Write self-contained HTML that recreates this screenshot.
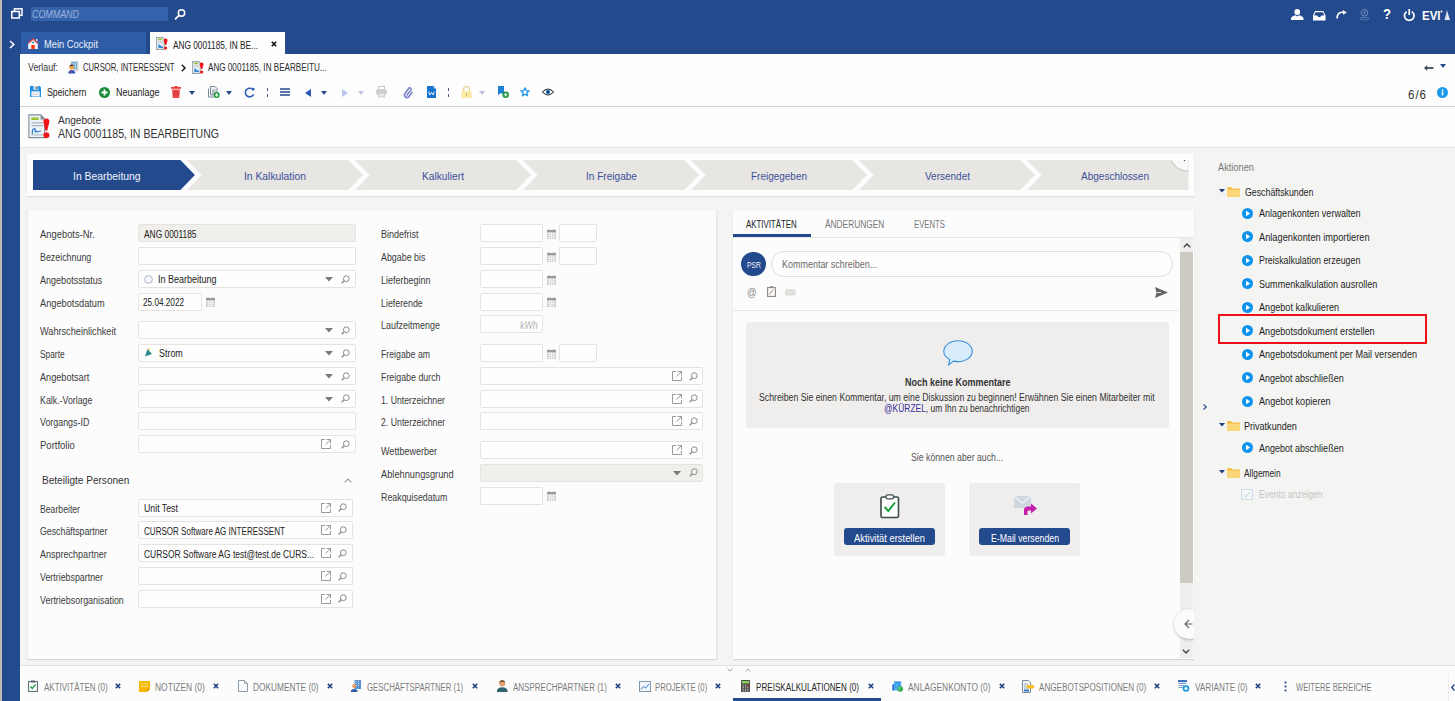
<!DOCTYPE html>
<html><head><meta charset="utf-8">
<style>
*{margin:0;padding:0;box-sizing:border-box}
html,body{width:1455px;height:701px;overflow:hidden}
body{position:relative;background:#f4f4f2;font-family:"Liberation Sans",sans-serif;font-size:10px;color:#333}
.a{position:absolute}
.t{position:absolute;white-space:nowrap;line-height:14px;height:14px;transform-origin:0 50%}
svg{position:absolute;overflow:visible}
.lb{color:#3b3b3b}
.fd{position:absolute;background:#fefefe;border:1px solid #e5e3df;border-radius:1.5px}
.dis{background:#f0efec}
.st{color:#3a4f9a;font-size:11px}
.act{color:#262626}
.bt{color:#6b6b6b;font-size:10px}
.bx{color:#2b4a8a;font-size:11px;font-weight:bold}
</style></head><body>
<!-- left strip & sidebar -->
<div class="a" style="left:0;top:0;width:2px;height:701px;background:#bdbcb2"></div>
<div class="a" style="left:2px;top:0;width:18px;height:701px;background:#244a8e"></div>
<!-- top bar -->
<div class="a" style="left:2px;top:0;width:1453px;height:54px;background:#244a8e"></div>
<div class="a" style="left:31px;top:7px;width:137px;height:14px;background:#3563ab"></div>
<span class="t" style="font-style: italic; color: rgb(157, 179, 220); font-size: 10px; left: 32px; top: 8px; transform: scaleX(0.89);">COMMAND</span>
<!-- window icon -->
<svg style="left:11px;top:8px" width="12" height="11" viewBox="0 0 12 11"><rect x="3.5" y="0.8" width="7.5" height="6.5" fill="none" stroke="#fff" stroke-width="1.5"></rect><rect x="0.8" y="3.5" width="7.5" height="6.5" fill="#244a8e" stroke="#fff" stroke-width="1.5"></rect></svg>
<!-- search icon -->
<svg style="left:174px;top:9px" width="12" height="11" viewBox="0 0 12 11"><circle cx="7.5" cy="4" r="3.2" fill="none" stroke="#fff" stroke-width="1.5"></circle><path d="M5.3 6.2 L1 10.3" stroke="#fff" stroke-width="1.8"></path></svg>
<!-- sidebar chevron -->
<svg style="left:9px;top:40px" width="6" height="9" viewBox="0 0 6 9"><path d="M1 1 L4.8 4.5 L1 8" fill="none" stroke="#fff" stroke-width="1.6"></path></svg>
<!-- tabs -->
<div class="a" style="left:21px;top:32px;width:125px;height:22px;background:#2e5ca6"></div>
<svg style="left:28px;top:38px" width="10" height="11" viewBox="0 0 10 11"><rect x="8" y="1" width="1.3" height="2.5" fill="#e8eef6"></rect><path d="M0.2 5.2 L5.1 0.8 L9.8 5.2 V10.9 H0.2 Z" fill="#f4f6fa"></path><path d="M0.4 5.3 L5.1 1 L9.6 5.3" fill="none" stroke="#d8464a" stroke-width="1.5"></path><rect x="3.3" y="7" width="3.4" height="3.9" fill="#ff3000"></rect><ellipse cx="5.1" cy="4.5" rx="1.2" ry="0.8" fill="#1878a8"></ellipse></svg>
<span class="t" style="color: rgb(232, 238, 248); left: 44px; top: 38px; transform: scaleX(0.934);">Mein Cockpit</span>
<div class="a" style="left:150px;top:32px;width:135px;height:22px;background:#fdfdfd"></div>
<svg style="left:156px;top:37px" width="12" height="13" viewBox="0 0 12 13"><path d="M0.6 0.6 H6.8 L8.2 2 V12.4 H0.6 Z" fill="#eef3f8" stroke="#9aa8ae" stroke-width="1.1"></path><rect x="2" y="1.8" width="4.2" height="1.4" fill="#9cc12e"></rect><path d="M2 4.5H7M2 5.9H7" stroke="#b0bec4" stroke-width="0.6"></path><path d="M2.3 11 V7 L7 10 V11 Z" fill="#3a8ad8"></path><path d="M9.6 1.4 C10.9 1.4 11.6 2.1 11.5 3.4 L10.3 8 H9 L7.8 3.4 C7.7 2.1 8.4 1.4 9.6 1.4 Z" fill="#f2141a"></path><circle cx="9.6" cy="11" r="1.6" fill="#f2141a"></circle></svg>
<span class="t" style="color: rgb(34, 34, 34); left: 172.5px; top: 38.5px; transform: scaleX(0.828);">ANG 0001185, IN BE...</span>
<svg style="left:271px;top:41px" width="6" height="6" viewBox="0 0 6 6"><path d="M0.8 0.8 L5.2 5.2 M5.2 0.8 L0.8 5.2" stroke="#111" stroke-width="1.6"></path></svg>

<!-- white header area -->
<div class="a" style="left:20px;top:54px;width:1435px;height:94px;background:#fdfdfd"></div>
<div class="a" style="left:20px;top:106px;width:1435px;height:1px;background:#d4d1ca"></div>
<div class="a" style="left:20px;top:147px;width:1435px;height:1px;background:#e6e4df"></div>

<!-- Verlauf row -->
<span class="t" style="color: rgb(51, 51, 51); font-size: 10px; left: 28px; top: 60.8px; transform: scaleX(0.884);">Verlauf:</span>
<svg style="left:67.5px;top:60.5px" width="11" height="13" viewBox="0 0 11 13"><rect x="2.6" y="0.2" width="7.8" height="10" fill="#cfd3d6"></rect><path d="M3.5 1.8H9.5M3.5 4.3H9.5M3.5 6.8H9.5" stroke="#2196e8" stroke-width="1.5" stroke-dasharray="1.2 0.9"></path><circle cx="3.6" cy="6.3" r="2.3" fill="#f9a33a"></circle><path d="M1.3 5.6 Q1.8 3.4 3.8 3.6 Q5.6 3.8 5.8 5.2 Q4 4.4 1.3 5.6Z" fill="#3c3a3a"></path><path d="M0.4 12.4 V11.6 Q0.8 9.3 3.6 9 Q6.6 9.3 7.2 11.6 V12.4 Z" fill="#3050c0"></path><path d="M3.6 9.2 L3.1 11 L3.6 12 L4.1 11 Z" fill="#e03030"></path></svg>
<span class="t" style="color: rgb(42, 42, 42); font-size: 10px; left: 83px; top: 60.8px; transform: scaleX(0.77);">CURSOR, INTERESSENT</span>
<svg style="left:180.5px;top:64px" width="5" height="8" viewBox="0 0 5 8"><path d="M0.8 0.8 L4 4 L0.8 7.2" fill="none" stroke="#222" stroke-width="1.5"></path></svg>
<svg style="left:192px;top:60.5px" width="12" height="13" viewBox="0 0 12 13"><path d="M0.6 0.6 H6.8 L8.2 2 V12.4 H0.6 Z" fill="#eef3f8" stroke="#9aa8ae" stroke-width="1.1"></path><rect x="2" y="1.8" width="4.2" height="1.4" fill="#9cc12e"></rect><path d="M2 4.5H7M2 5.9H7" stroke="#b0bec4" stroke-width="0.6"></path><path d="M2.3 11 V7 L7 10 V11 Z" fill="#3a8ad8"></path><path d="M9.6 1.4 C10.9 1.4 11.6 2.1 11.5 3.4 L10.3 8 H9 L7.8 3.4 C7.7 2.1 8.4 1.4 9.6 1.4 Z" fill="#f2141a"></path><circle cx="9.6" cy="11" r="1.6" fill="#f2141a"></circle></svg>
<span class="t" style="color: rgb(42, 42, 42); font-size: 10px; left: 207.5px; top: 60.8px; transform: scaleX(0.812);">ANG 0001185, IN BEARBEITU...</span>
<svg style="left:1424px;top:64.5px" width="9.5" height="6" viewBox="0 0 9.5 6"><path d="M0 3 L3.2 0 V6 Z" fill="#3a5055"></path><rect x="2.5" y="2.1" width="7" height="1.8" fill="#3a5055"></rect></svg>
<svg style="left:1440px;top:64px" width="6" height="4" viewBox="0 0 6 4"><path d="M0 0 H6 L3 4 Z" fill="#244a8e"></path></svg>

<!-- toolbar -->
<svg style="left:30px;top:86px" width="11" height="11" viewBox="0 0 11 11"><path d="M0 0 H10 L11 1.5 V11 H0 Z" fill="#1e8ee0"></path><rect x="3.4" y="0" width="4.9" height="3.8" fill="#d4d8da"></rect><rect x="6.2" y="0.8" width="1.2" height="2.2" fill="#1a5a8a"></rect><rect x="1.4" y="5.3" width="8.3" height="5.2" fill="#f6f7f8"></rect><path d="M2.2 7H9M2.2 8.8H9" stroke="#c8ccd0" stroke-width="0.7"></path></svg>
<span class="t" style="color: rgb(34, 34, 34); left: 46.5px; top: 86px; transform: scaleX(0.877);">Speichern</span>
<svg style="left:99px;top:86.5px" width="11" height="11" viewBox="0 0 11 11"><circle cx="5.5" cy="5.5" r="5.5" fill="#1b8b3a"></circle><path d="M5.5 2.5 V8.5 M2.5 5.5 H8.5" stroke="#fff" stroke-width="1.8"></path></svg>
<span class="t" style="color: rgb(34, 34, 34); left: 115.5px; top: 86px; transform: scaleX(0.899);">Neuanlage</span>
<svg style="left:171px;top:86px" width="10" height="12" viewBox="0 0 10 12"><rect x="0" y="1" width="10" height="1.8" fill="#e83b3b"></rect><rect x="3.5" y="0" width="3" height="1.2" fill="#e83b3b"></rect><path d="M1 3.5 H9 L8.3 12 H1.7 Z" fill="#f05050"></path><path d="M3.3 5 V10.5 M5 5 V10.5 M6.7 5 V10.5" stroke="#b82020" stroke-width="0.6"></path></svg>
<svg style="left:189px;top:90.5px" width="6" height="4" viewBox="0 0 6 4"><path d="M0 0 H6 L3 4 Z" fill="#244a8e"></path></svg>
<svg style="left:207.5px;top:86px" width="12" height="12" viewBox="0 0 12 12"><path d="M2.5 0.5 H7 L9 2.5 V9 H2.5 Z" fill="#eef1f3" stroke="#6a7a88" stroke-width="0.9"></path><path d="M0.5 2.5 V11 H6" fill="none" stroke="#6a7a88" stroke-width="0.9"></path><path d="M4 4h3.5M4 5.8h3.5M4 7.5h2" stroke="#6a7a88" stroke-width="0.7"></path><circle cx="8.7" cy="9" r="3" fill="#1b9b3a"></circle><path d="M8.7 7.3 V10.7 M7 9 H10.4" stroke="#fff" stroke-width="1.1"></path></svg>
<svg style="left:226px;top:90.5px" width="6" height="4" viewBox="0 0 6 4"><path d="M0 0 H6 L3 4 Z" fill="#244a8e"></path></svg>
<svg style="left:244px;top:86.5px" width="11.5" height="11" viewBox="0 0 12 11"><path d="M9.8 3.2 A4.5 4.5 0 1 0 10 7.5" fill="none" stroke="#2f63b5" stroke-width="1.7"></path><path d="M7.5 0.5 L11 0.8 L10.6 4.3 Z" fill="#2f63b5"></path></svg>
<div class="a" style="left:267px;top:88px;width:1px;height:9px;border-left:1px dashed #557"></div>
<svg style="left:280px;top:88px" width="10" height="8" viewBox="0 0 10 8"><path d="M0 1H10M0 4H10M0 7H10" stroke="#244a8e" stroke-width="1.6"></path></svg>
<svg style="left:304.5px;top:88.5px" width="6" height="8" viewBox="0 0 6 8"><path d="M6 0 V8 L0 4 Z" fill="#2e58b8"></path></svg>
<svg style="left:320.5px;top:90.5px" width="6" height="4" viewBox="0 0 6 4"><path d="M0 0 H6 L3 4 Z" fill="#244a8e"></path></svg>
<svg style="left:341.5px;top:88.5px" width="6" height="8" viewBox="0 0 6 8"><path d="M0 0 V8 L6 4 Z" fill="#b9c4ea"></path></svg>
<svg style="left:357.5px;top:90.5px" width="6" height="4" viewBox="0 0 6 4"><path d="M0 0 H6 L3 4 Z" fill="#c0c6dc"></path></svg>
<svg style="left:376px;top:86px" width="11" height="11" viewBox="0 0 11 11"><rect x="2.5" y="0.5" width="6" height="3" fill="none" stroke="#c8c8c8" stroke-width="1"></rect><rect x="0" y="3.5" width="11" height="5" rx="1" fill="#cfcfcf"></rect><rect x="2.5" y="7" width="6" height="4" fill="#e6e6e6" stroke="#c8c8c8" stroke-width="0.8"></rect></svg>
<svg style="left:404px;top:86.5px" width="9" height="11" viewBox="0 0 9 11"><path d="M2.5 8.5 L7 3 A1.5 1.5 0 0 0 5 1 L1 6.5 A2.5 2.5 0 0 0 5 9.5 L8.3 5" fill="none" stroke="#7c86c8" stroke-width="1.6"></path></svg>
<svg style="left:427px;top:86px" width="9" height="12" viewBox="0 0 9 12"><path d="M0 0 H6.5 L9 2.5 V12 H0 Z" fill="#1873cf"></path><path d="M6.5 0 V2.5 H9" fill="#b6d4f2"></path><path d="M1.8 5.5 L2.8 9 L4.5 6.5 L6.2 9 L7.2 5.5" fill="none" stroke="#fff" stroke-width="0.9"></path></svg>
<div class="a" style="left:448px;top:88px;width:1px;height:9px;border-left:1px dashed #557"></div>
<svg style="left:461px;top:86px" width="11" height="12" viewBox="0 0 11 12"><path d="M2.5 5.5 V3.5 A3 3 0 0 1 8.5 3.5 V5.5" fill="none" stroke="#e7d8a0" stroke-width="1.4"></path><rect x="0.5" y="5" width="10" height="7" fill="#fbe9a6"></rect><rect x="5" y="7" width="1" height="3" fill="#d8b96a"></rect></svg>
<svg style="left:479px;top:90.5px" width="6" height="4" viewBox="0 0 6 4"><path d="M0 0 H6 L3 4 Z" fill="#b8c0d8"></path></svg>
<svg style="left:497.5px;top:86px" width="11" height="12" viewBox="0 0 11 12"><path d="M0 0 H6 V9 L3 7 L0 9 Z" fill="#1d7fd6"></path><circle cx="7.7" cy="8.7" r="3.2" fill="#18963a"></circle><path d="M7.7 6.9 V10.5 M5.9 8.7 H9.5" stroke="#fff" stroke-width="1.1"></path></svg>
<svg style="left:520px;top:86.5px" width="10" height="10" viewBox="0 0 10 10"><path d="M5 0.8 L6.2 3.6 L9.2 3.8 L6.9 5.8 L7.6 8.8 L5 7.2 L2.4 8.8 L3.1 5.8 L0.8 3.8 L3.8 3.6 Z" fill="none" stroke="#1e96e8" stroke-width="1.3" stroke-linejoin="round"></path></svg>
<svg style="left:542px;top:88px" width="12" height="8" viewBox="0 0 12 8"><path d="M0.5 4 Q6 -2 11.5 4 Q6 10 0.5 4 Z" fill="#fff" stroke="#333" stroke-width="1.1"></path><circle cx="6" cy="4" r="2.2" fill="#1878d0"></circle><circle cx="6" cy="4" r="0.9" fill="#111"></circle></svg>
<span class="t" style="color: rgb(51, 51, 51); font-size: 12px; letter-spacing: 1px; left: 1408px; top: 87.5px; transform: scaleX(0.965);">6/6</span>
<svg style="left:1436.5px;top:86.5px" width="11" height="11" viewBox="0 0 11 11"><circle cx="5.5" cy="5.5" r="5.5" fill="#1a9ae8"></circle><rect x="4.8" y="4.5" width="1.5" height="4" fill="#fff"></rect><circle cx="5.5" cy="3" r="0.85" fill="#fff"></circle></svg>

<!-- header -->
<svg style="left:27.5px;top:113.5px" width="22" height="24.5" viewBox="0 0 22 24.5"><path d="M0.9 0.9 H12.8 L16.6 4.9 V23.6 H0.9 Z" fill="#eef3f8" stroke="#7f8f96" stroke-width="1.1"></path><path d="M12.6 0.9 V5.6 H17 Z" fill="#7a8a90"></path><rect x="3.3" y="3.4" width="7.3" height="2.6" fill="#9cc12e"></rect><path d="M3.5 8.9 H15.3 M3.5 11.7 H15.3" stroke="#8fa0a6" stroke-width="0.9"></path><path d="M4.3 20 Q4 14.8 6.4 14.6 Q8 14.7 7 18.2 Q8.5 16.5 9.2 18 Q10.5 17.2 13 17" fill="none" stroke="#2a78d0" stroke-width="1.2"></path><path d="M3.5 20.9 H15" stroke="#8fa0a6" stroke-width="0.8"></path><path d="M18.4 4.6 C20.4 4.6 21.6 5.8 21.4 8 L19.2 16.8 H17.6 L15.4 8 C15.2 5.8 16.4 4.6 18.4 4.6 Z" fill="#f2141a"></path><circle cx="18.4" cy="21.2" r="3" fill="#f2141a"></circle></svg>
<span class="t" style="color: rgb(51, 51, 51); font-size: 10px; left: 58px; top: 113.6px; transform: scaleX(1.004);">Angebote</span>
<span class="t" style="color: rgb(51, 51, 51); font-size: 12px; left: 58px; top: 127px; transform: scaleX(0.879);">ANG 0001185, IN BEARBEITUNG</span>


<!-- process bar -->
<div class="a" style="left:27px;top:154px;width:1167px;height:42px;background:#fdfdfd;box-shadow:0 1px 1px rgba(0,0,0,.10)"></div>
<svg style="left:0;top:0" width="1455" height="701" viewBox="0 0 1455 701"><polygon points="33.0,160.0 180.4,160.0 194.9,175.0 180.4,190.0 33.0,190.0" fill="#244a8e"></polygon><polygon points="187.0,160.0 348.4,160.0 362.9,175.0 348.4,190.0 187.0,190.0 201.5,175.0" fill="#e7e6e2"></polygon><polygon points="355.0,160.0 516.4,160.0 530.9,175.0 516.4,190.0 355.0,190.0 369.5,175.0" fill="#e7e6e2"></polygon><polygon points="523.0,160.0 684.4,160.0 698.9,175.0 684.4,190.0 523.0,190.0 537.5,175.0" fill="#e7e6e2"></polygon><polygon points="691.0,160.0 852.4,160.0 866.9,175.0 852.4,190.0 691.0,190.0 705.5,175.0" fill="#e7e6e2"></polygon><polygon points="859.0,160.0 1020.4,160.0 1034.9,175.0 1020.4,190.0 859.0,190.0 873.5,175.0" fill="#e7e6e2"></polygon><polygon points="1027.0,160.0 1188.5,160.0 1188.5,190.0 1027.0,190.0 1041.5,175.0" fill="#e7e6e2"></polygon><defs><clipPath id="cp"><rect x="1100" y="160" width="88.5" height="30"></rect></clipPath></defs><g clip-path="url(#cp)"><circle cx="1187" cy="154.5" r="17" fill="#cfcdc8"></circle><circle cx="1187" cy="154" r="16.2" fill="#f8f8f7"></circle><circle cx="1184.5" cy="160.6" r="0.7" fill="#555"></circle></g></svg>
<span class="t st" style="color: rgb(242, 245, 250); left: 72.6px; top: 169.15px; transform: scaleX(0.945);">In Bearbeitung</span>
<span class="t st" style="color: rgb(61, 79, 156); left: 244px; top: 169.15px; transform: scaleX(0.939);">In Kalkulation</span>
<span class="t st" style="color: rgb(61, 79, 156); left: 421.8px; top: 169.15px; transform: scaleX(0.928);">Kalkuliert</span>
<span class="t st" style="color: rgb(61, 79, 156); left: 585.5px; top: 169.15px; transform: scaleX(0.916);">In Freigabe</span>
<span class="t st" style="color: rgb(61, 79, 156); left: 751.4px; top: 169.15px; transform: scaleX(0.906);">Freigegeben</span>
<span class="t st" style="color: rgb(61, 79, 156); left: 924.7px; top: 169.15px; transform: scaleX(0.908);">Versendet</span>
<span class="t st" style="color: rgb(61, 79, 156); left: 1081px; top: 169.15px; transform: scaleX(0.911);">Abgeschlossen</span>

<!-- form card -->
<div class="a" style="left:27px;top:210px;width:690px;height:449px;background:#fcfcfc;border-left:1px solid #ecebe7;border-right:1px solid #e8e6e2;box-shadow:0 1px 1px rgba(0,0,0,.12)"></div>
<span class="t lb" style="left: 40px; top: 228px; transform: scaleX(0.939);">Angebots-Nr.</span>
<div class="fd dis" style="left:138.0px;top:224.0px;width:218.0px;height:18px"></div>
<span class="t lb" style="left: 40px; top: 251px; transform: scaleX(0.887);">Bezeichnung</span>
<div class="fd " style="left:138.0px;top:247.0px;width:218.0px;height:18px"></div>
<span class="t lb" style="left: 40px; top: 274px; transform: scaleX(0.904);">Angebotsstatus</span>
<div class="fd " style="left:138.0px;top:270.0px;width:218.0px;height:18px"></div>
<svg style="left:325.0px;top:277.0px" width="8" height="5" viewBox="0 0 8 5"><path d="M0 0 H8 L4 4.5 Z" fill="#7a7a7a"></path></svg>
<svg style="left:340.5px;top:274.5px" width="9" height="9" viewBox="0 0 9 9"><circle cx="5.3" cy="3.7" r="2.9" fill="none" stroke="#8a8a8a" stroke-width="1"></circle><path d="M3.2 5.8 L0.7 8.3" stroke="#8a8a8a" stroke-width="1.3"></path></svg>
<span class="t lb" style="left: 40px; top: 296.5px; transform: scaleX(0.923);">Angebotsdatum</span>
<div class="fd " style="left:138.0px;top:292.5px;width:63.5px;height:18px"></div>
<svg style="left:205.5px;top:297.0px" width="9" height="10" viewBox="0 0 9 10"><rect x="0" y="1" width="9" height="9" fill="#c9c9c9"></rect><rect x="0" y="1" width="9" height="2" fill="#9a9a9a"></rect><path d="M0.5 4.8H8.5M0.5 6.6H8.5M0.5 8.4H8.5M2.3 3.5V10M4.5 3.5V10M6.7 3.5V10" stroke="#fafafa" stroke-width="0.7"></path><path d="M2 0 V2 M7 0 V2" stroke="#9a9a9a" stroke-width="0.8"></path></svg>
<span class="t lb" style="left: 40px; top: 325px; transform: scaleX(0.916);">Wahrscheinlichkeit</span>
<div class="fd " style="left:138.0px;top:321.0px;width:218.0px;height:18px"></div>
<svg style="left:325.0px;top:328.0px" width="8" height="5" viewBox="0 0 8 5"><path d="M0 0 H8 L4 4.5 Z" fill="#7a7a7a"></path></svg>
<svg style="left:340.5px;top:325.5px" width="9" height="9" viewBox="0 0 9 9"><circle cx="5.3" cy="3.7" r="2.9" fill="none" stroke="#8a8a8a" stroke-width="1"></circle><path d="M3.2 5.8 L0.7 8.3" stroke="#8a8a8a" stroke-width="1.3"></path></svg>
<span class="t lb" style="left: 40px; top: 348px; transform: scaleX(0.835);">Sparte</span>
<div class="fd " style="left:138.0px;top:344.0px;width:218.0px;height:18px"></div>
<svg style="left:325.0px;top:351.0px" width="8" height="5" viewBox="0 0 8 5"><path d="M0 0 H8 L4 4.5 Z" fill="#7a7a7a"></path></svg>
<svg style="left:340.5px;top:348.5px" width="9" height="9" viewBox="0 0 9 9"><circle cx="5.3" cy="3.7" r="2.9" fill="none" stroke="#8a8a8a" stroke-width="1"></circle><path d="M3.2 5.8 L0.7 8.3" stroke="#8a8a8a" stroke-width="1.3"></path></svg>
<span class="t lb" style="left: 40px; top: 371px; transform: scaleX(0.914);">Angebotsart</span>
<div class="fd " style="left:138.0px;top:367.0px;width:218.0px;height:18px"></div>
<svg style="left:325.0px;top:374.0px" width="8" height="5" viewBox="0 0 8 5"><path d="M0 0 H8 L4 4.5 Z" fill="#7a7a7a"></path></svg>
<svg style="left:340.5px;top:371.5px" width="9" height="9" viewBox="0 0 9 9"><circle cx="5.3" cy="3.7" r="2.9" fill="none" stroke="#8a8a8a" stroke-width="1"></circle><path d="M3.2 5.8 L0.7 8.3" stroke="#8a8a8a" stroke-width="1.3"></path></svg>
<span class="t lb" style="left: 40px; top: 393.5px; transform: scaleX(0.881);">Kalk.-Vorlage</span>
<div class="fd " style="left:138.0px;top:389.5px;width:218.0px;height:18px"></div>
<svg style="left:325.0px;top:396.5px" width="8" height="5" viewBox="0 0 8 5"><path d="M0 0 H8 L4 4.5 Z" fill="#7a7a7a"></path></svg>
<svg style="left:340.5px;top:394.0px" width="9" height="9" viewBox="0 0 9 9"><circle cx="5.3" cy="3.7" r="2.9" fill="none" stroke="#8a8a8a" stroke-width="1"></circle><path d="M3.2 5.8 L0.7 8.3" stroke="#8a8a8a" stroke-width="1.3"></path></svg>
<span class="t lb" style="left: 40px; top: 416px; transform: scaleX(0.887);">Vorgangs-ID</span>
<div class="fd " style="left:138.0px;top:412.0px;width:218.0px;height:18px"></div>
<span class="t lb" style="left: 40px; top: 439px; transform: scaleX(0.951);">Portfolio</span>
<div class="fd " style="left:138.0px;top:435.0px;width:218.0px;height:18px"></div>
<svg style="left:321.0px;top:439.0px" width="10" height="10" viewBox="0 0 10 10"><path d="M4 0.5 H0.5 V9.5 H9.5 V6" fill="none" stroke="#9a9a9a" stroke-width="1"></path><path d="M5.5 0.5 H9.5 V4.5 M9.5 0.5 L4.5 5.5" fill="none" stroke="#9a9a9a" stroke-width="1"></path></svg>
<svg style="left:340.5px;top:439.5px" width="9" height="9" viewBox="0 0 9 9"><circle cx="5.3" cy="3.7" r="2.9" fill="none" stroke="#8a8a8a" stroke-width="1"></circle><path d="M3.2 5.8 L0.7 8.3" stroke="#8a8a8a" stroke-width="1.3"></path></svg>
<span class="t" style="color: rgb(34, 34, 34); left: 143.7px; top: 228px; transform: scaleX(0.838);">ANG 0001185</span>
<svg style="left:143.5px;top:275px" width="9" height="9" viewBox="0 0 9 9"><circle cx="4.5" cy="4.5" r="3.9" fill="#f4f6fa" stroke="#a8b0bc" stroke-width="0.9"></circle></svg>
<span class="t" style="color: rgb(34, 34, 34); left: 158.3px; top: 273.3px; transform: scaleX(0.899);">In Bearbeitung</span>
<span class="t" style="color: rgb(34, 34, 34); left: 143.3px; top: 296px; transform: scaleX(0.819);">25.04.2022</span>
<svg style="left:144px;top:348px" width="9" height="9" viewBox="0 0 9 9"><path d="M1 8.5 L3.5 1 L8 6 Z" fill="#2d8a8a"></path><path d="M4 0.5 L6 0 L5.5 2.5 Z" fill="#f0c020"></path></svg>
<span class="t" style="color: rgb(34, 34, 34); left: 158.8px; top: 346.7px; transform: scaleX(0.892);">Strom</span>
<span class="t" style="color: rgb(51, 51, 51); font-size: 11px; left: 41.6px; top: 472.95px; transform: scaleX(0.915);">Beteiligte Personen</span>
<svg style="left:343.5px;top:478px" width="8" height="5" viewBox="0 0 8 5"><path d="M0.7 4.3 L4 1 L7.3 4.3" fill="none" stroke="#999" stroke-width="1.1"></path></svg>
<span class="t lb" style="left: 40px; top: 502.5px; transform: scaleX(0.867);">Bearbeiter</span>
<div class="fd " style="left:138.0px;top:498.5px;width:214.5px;height:18px"></div>
<svg style="left:321.0px;top:502.5px" width="10" height="10" viewBox="0 0 10 10"><path d="M4 0.5 H0.5 V9.5 H9.5 V6" fill="none" stroke="#9a9a9a" stroke-width="1"></path><path d="M5.5 0.5 H9.5 V4.5 M9.5 0.5 L4.5 5.5" fill="none" stroke="#9a9a9a" stroke-width="1"></path></svg>
<svg style="left:338.0px;top:503.0px" width="9" height="9" viewBox="0 0 9 9"><circle cx="5.3" cy="3.7" r="2.9" fill="none" stroke="#8a8a8a" stroke-width="1"></circle><path d="M3.2 5.8 L0.7 8.3" stroke="#8a8a8a" stroke-width="1.3"></path></svg>
<span class="t" style="color: rgb(34, 34, 34); left: 143.5px; top: 502px; transform: scaleX(0.875);">Unit Test</span>
<span class="t lb" style="left: 40px; top: 525.3px; transform: scaleX(0.879);">Geschäftspartner</span>
<div class="fd " style="left:138.0px;top:521.3px;width:214.5px;height:18px"></div>
<svg style="left:321.0px;top:525.3px" width="10" height="10" viewBox="0 0 10 10"><path d="M4 0.5 H0.5 V9.5 H9.5 V6" fill="none" stroke="#9a9a9a" stroke-width="1"></path><path d="M5.5 0.5 H9.5 V4.5 M9.5 0.5 L4.5 5.5" fill="none" stroke="#9a9a9a" stroke-width="1"></path></svg>
<svg style="left:338.0px;top:525.8px" width="9" height="9" viewBox="0 0 9 9"><circle cx="5.3" cy="3.7" r="2.9" fill="none" stroke="#8a8a8a" stroke-width="1"></circle><path d="M3.2 5.8 L0.7 8.3" stroke="#8a8a8a" stroke-width="1.3"></path></svg>
<span class="t" style="color: rgb(34, 34, 34); left: 143.5px; top: 524.8px; transform: scaleX(0.805);">CURSOR Software AG INTERESSENT</span>
<span class="t lb" style="left: 40px; top: 548.2px; transform: scaleX(0.902);">Ansprechpartner</span>
<div class="fd " style="left:138.0px;top:544.2px;width:214.5px;height:18px"></div>
<svg style="left:321.0px;top:548.2px" width="10" height="10" viewBox="0 0 10 10"><path d="M4 0.5 H0.5 V9.5 H9.5 V6" fill="none" stroke="#9a9a9a" stroke-width="1"></path><path d="M5.5 0.5 H9.5 V4.5 M9.5 0.5 L4.5 5.5" fill="none" stroke="#9a9a9a" stroke-width="1"></path></svg>
<svg style="left:338.0px;top:548.7px" width="9" height="9" viewBox="0 0 9 9"><circle cx="5.3" cy="3.7" r="2.9" fill="none" stroke="#8a8a8a" stroke-width="1"></circle><path d="M3.2 5.8 L0.7 8.3" stroke="#8a8a8a" stroke-width="1.3"></path></svg>
<span class="t" style="color: rgb(34, 34, 34); left: 143.5px; top: 547.7px; transform: scaleX(0.847);">CURSOR Software AG test@test.de CURS...</span>
<span class="t lb" style="left: 40px; top: 571.2px; transform: scaleX(0.885);">Vertriebspartner</span>
<div class="fd " style="left:138.0px;top:567.2px;width:214.5px;height:18px"></div>
<svg style="left:321.0px;top:571.2px" width="10" height="10" viewBox="0 0 10 10"><path d="M4 0.5 H0.5 V9.5 H9.5 V6" fill="none" stroke="#9a9a9a" stroke-width="1"></path><path d="M5.5 0.5 H9.5 V4.5 M9.5 0.5 L4.5 5.5" fill="none" stroke="#9a9a9a" stroke-width="1"></path></svg>
<svg style="left:338.0px;top:571.7px" width="9" height="9" viewBox="0 0 9 9"><circle cx="5.3" cy="3.7" r="2.9" fill="none" stroke="#8a8a8a" stroke-width="1"></circle><path d="M3.2 5.8 L0.7 8.3" stroke="#8a8a8a" stroke-width="1.3"></path></svg>
<span class="t lb" style="left: 40px; top: 593.7px; transform: scaleX(0.892);">Vertriebsorganisation</span>
<div class="fd " style="left:138.0px;top:589.7px;width:214.5px;height:18px"></div>
<svg style="left:321.0px;top:593.7px" width="10" height="10" viewBox="0 0 10 10"><path d="M4 0.5 H0.5 V9.5 H9.5 V6" fill="none" stroke="#9a9a9a" stroke-width="1"></path><path d="M5.5 0.5 H9.5 V4.5 M9.5 0.5 L4.5 5.5" fill="none" stroke="#9a9a9a" stroke-width="1"></path></svg>
<svg style="left:338.0px;top:594.2px" width="9" height="9" viewBox="0 0 9 9"><circle cx="5.3" cy="3.7" r="2.9" fill="none" stroke="#8a8a8a" stroke-width="1"></circle><path d="M3.2 5.8 L0.7 8.3" stroke="#8a8a8a" stroke-width="1.3"></path></svg>
<span class="t lb" style="left: 381.3px; top: 228px; transform: scaleX(0.902);">Bindefrist</span>
<div class="fd " style="left:480.0px;top:224.0px;width:63.0px;height:18px"></div>
<svg style="left:547.3px;top:228.5px" width="9" height="10" viewBox="0 0 9 10"><rect x="0" y="1" width="9" height="9" fill="#c9c9c9"></rect><rect x="0" y="1" width="9" height="2" fill="#9a9a9a"></rect><path d="M0.5 4.8H8.5M0.5 6.6H8.5M0.5 8.4H8.5M2.3 3.5V10M4.5 3.5V10M6.7 3.5V10" stroke="#fafafa" stroke-width="0.7"></path><path d="M2 0 V2 M7 0 V2" stroke="#9a9a9a" stroke-width="0.8"></path></svg>
<div class="fd " style="left:559.3px;top:224.0px;width:37.5px;height:18px"></div>
<span class="t lb" style="left: 381.3px; top: 251px; transform: scaleX(0.889);">Abgabe bis</span>
<div class="fd " style="left:480.0px;top:247.0px;width:63.0px;height:18px"></div>
<svg style="left:547.3px;top:251.5px" width="9" height="10" viewBox="0 0 9 10"><rect x="0" y="1" width="9" height="9" fill="#c9c9c9"></rect><rect x="0" y="1" width="9" height="2" fill="#9a9a9a"></rect><path d="M0.5 4.8H8.5M0.5 6.6H8.5M0.5 8.4H8.5M2.3 3.5V10M4.5 3.5V10M6.7 3.5V10" stroke="#fafafa" stroke-width="0.7"></path><path d="M2 0 V2 M7 0 V2" stroke="#9a9a9a" stroke-width="0.8"></path></svg>
<div class="fd " style="left:559.3px;top:247.0px;width:37.5px;height:18px"></div>
<span class="t lb" style="left: 381.3px; top: 274px; transform: scaleX(0.901);">Lieferbeginn</span>
<div class="fd " style="left:480.0px;top:270.0px;width:63.0px;height:18px"></div>
<svg style="left:547.3px;top:274.5px" width="9" height="10" viewBox="0 0 9 10"><rect x="0" y="1" width="9" height="9" fill="#c9c9c9"></rect><rect x="0" y="1" width="9" height="2" fill="#9a9a9a"></rect><path d="M0.5 4.8H8.5M0.5 6.6H8.5M0.5 8.4H8.5M2.3 3.5V10M4.5 3.5V10M6.7 3.5V10" stroke="#fafafa" stroke-width="0.7"></path><path d="M2 0 V2 M7 0 V2" stroke="#9a9a9a" stroke-width="0.8"></path></svg>
<span class="t lb" style="left: 381.3px; top: 296.7px; transform: scaleX(0.884);">Lieferende</span>
<div class="fd " style="left:480.0px;top:292.7px;width:63.0px;height:18px"></div>
<svg style="left:547.3px;top:297.2px" width="9" height="10" viewBox="0 0 9 10"><rect x="0" y="1" width="9" height="9" fill="#c9c9c9"></rect><rect x="0" y="1" width="9" height="2" fill="#9a9a9a"></rect><path d="M0.5 4.8H8.5M0.5 6.6H8.5M0.5 8.4H8.5M2.3 3.5V10M4.5 3.5V10M6.7 3.5V10" stroke="#fafafa" stroke-width="0.7"></path><path d="M2 0 V2 M7 0 V2" stroke="#9a9a9a" stroke-width="0.8"></path></svg>
<span class="t lb" style="left: 381.3px; top: 319.3px; transform: scaleX(0.898);">Laufzeitmenge</span>
<div class="fd " style="left:480.0px;top:315.3px;width:63.0px;height:18px"></div>
<span class="t" style="color: rgb(181, 181, 181); font-style: italic; font-size: 10px; left: 519.9px; top: 318.8px; transform: scaleX(0.89);">kWh</span>
<span class="t lb" style="left: 381.3px; top: 348px; transform: scaleX(0.873);">Freigabe am</span>
<div class="fd " style="left:480.0px;top:344.0px;width:63.0px;height:18px"></div>
<svg style="left:547.3px;top:348.5px" width="9" height="10" viewBox="0 0 9 10"><rect x="0" y="1" width="9" height="9" fill="#c9c9c9"></rect><rect x="0" y="1" width="9" height="2" fill="#9a9a9a"></rect><path d="M0.5 4.8H8.5M0.5 6.6H8.5M0.5 8.4H8.5M2.3 3.5V10M4.5 3.5V10M6.7 3.5V10" stroke="#fafafa" stroke-width="0.7"></path><path d="M2 0 V2 M7 0 V2" stroke="#9a9a9a" stroke-width="0.8"></path></svg>
<div class="fd " style="left:559.3px;top:344.0px;width:37.5px;height:18px"></div>
<span class="t lb" style="left: 381.3px; top: 371px; transform: scaleX(0.885);">Freigabe durch</span>
<div class="fd " style="left:480.0px;top:367.0px;width:222.6px;height:18px"></div>
<svg style="left:671.8px;top:371.0px" width="10" height="10" viewBox="0 0 10 10"><path d="M4 0.5 H0.5 V9.5 H9.5 V6" fill="none" stroke="#9a9a9a" stroke-width="1"></path><path d="M5.5 0.5 H9.5 V4.5 M9.5 0.5 L4.5 5.5" fill="none" stroke="#9a9a9a" stroke-width="1"></path></svg>
<svg style="left:688.5px;top:371.5px" width="9" height="9" viewBox="0 0 9 9"><circle cx="5.3" cy="3.7" r="2.9" fill="none" stroke="#8a8a8a" stroke-width="1"></circle><path d="M3.2 5.8 L0.7 8.3" stroke="#8a8a8a" stroke-width="1.3"></path></svg>
<span class="t lb" style="left: 381.3px; top: 393.6px; transform: scaleX(0.872);">1. Unterzeichner</span>
<div class="fd " style="left:480.0px;top:389.6px;width:222.6px;height:18px"></div>
<svg style="left:671.8px;top:393.6px" width="10" height="10" viewBox="0 0 10 10"><path d="M4 0.5 H0.5 V9.5 H9.5 V6" fill="none" stroke="#9a9a9a" stroke-width="1"></path><path d="M5.5 0.5 H9.5 V4.5 M9.5 0.5 L4.5 5.5" fill="none" stroke="#9a9a9a" stroke-width="1"></path></svg>
<svg style="left:688.5px;top:394.1px" width="9" height="9" viewBox="0 0 9 9"><circle cx="5.3" cy="3.7" r="2.9" fill="none" stroke="#8a8a8a" stroke-width="1"></circle><path d="M3.2 5.8 L0.7 8.3" stroke="#8a8a8a" stroke-width="1.3"></path></svg>
<span class="t lb" style="left: 381.3px; top: 416.2px; transform: scaleX(0.876);">2. Unterzeichner</span>
<div class="fd " style="left:480.0px;top:412.2px;width:222.6px;height:18px"></div>
<svg style="left:671.8px;top:416.2px" width="10" height="10" viewBox="0 0 10 10"><path d="M4 0.5 H0.5 V9.5 H9.5 V6" fill="none" stroke="#9a9a9a" stroke-width="1"></path><path d="M5.5 0.5 H9.5 V4.5 M9.5 0.5 L4.5 5.5" fill="none" stroke="#9a9a9a" stroke-width="1"></path></svg>
<svg style="left:688.5px;top:416.7px" width="9" height="9" viewBox="0 0 9 9"><circle cx="5.3" cy="3.7" r="2.9" fill="none" stroke="#8a8a8a" stroke-width="1"></circle><path d="M3.2 5.8 L0.7 8.3" stroke="#8a8a8a" stroke-width="1.3"></path></svg>
<span class="t lb" style="left: 381.3px; top: 445.2px; transform: scaleX(0.904);">Wettbewerber</span>
<div class="fd " style="left:480.0px;top:441.2px;width:222.6px;height:18px"></div>
<svg style="left:671.8px;top:445.2px" width="10" height="10" viewBox="0 0 10 10"><path d="M4 0.5 H0.5 V9.5 H9.5 V6" fill="none" stroke="#9a9a9a" stroke-width="1"></path><path d="M5.5 0.5 H9.5 V4.5 M9.5 0.5 L4.5 5.5" fill="none" stroke="#9a9a9a" stroke-width="1"></path></svg>
<svg style="left:688.5px;top:445.7px" width="9" height="9" viewBox="0 0 9 9"><circle cx="5.3" cy="3.7" r="2.9" fill="none" stroke="#8a8a8a" stroke-width="1"></circle><path d="M3.2 5.8 L0.7 8.3" stroke="#8a8a8a" stroke-width="1.3"></path></svg>
<span class="t lb" style="left: 381.3px; top: 467.8px; transform: scaleX(0.926);">Ablehnungsgrund</span>
<div class="fd dis" style="left:480.0px;top:463.8px;width:222.6px;height:18px"></div>
<svg style="left:672.9px;top:470.8px" width="8" height="5" viewBox="0 0 8 5"><path d="M0 0 H8 L4 4.5 Z" fill="#7a7a7a"></path></svg>
<svg style="left:688.5px;top:468.3px" width="9" height="9" viewBox="0 0 9 9"><circle cx="5.3" cy="3.7" r="2.9" fill="none" stroke="#8a8a8a" stroke-width="1"></circle><path d="M3.2 5.8 L0.7 8.3" stroke="#8a8a8a" stroke-width="1.3"></path></svg>
<span class="t lb" style="left: 381.3px; top: 490.7px; transform: scaleX(0.885);">Reakquisedatum</span>
<div class="fd " style="left:480.0px;top:486.7px;width:63.0px;height:18px"></div>
<svg style="left:547.3px;top:491.2px" width="9" height="10" viewBox="0 0 9 10"><rect x="0" y="1" width="9" height="9" fill="#c9c9c9"></rect><rect x="0" y="1" width="9" height="2" fill="#9a9a9a"></rect><path d="M0.5 4.8H8.5M0.5 6.6H8.5M0.5 8.4H8.5M2.3 3.5V10M4.5 3.5V10M6.7 3.5V10" stroke="#fafafa" stroke-width="0.7"></path><path d="M2 0 V2 M7 0 V2" stroke="#9a9a9a" stroke-width="0.8"></path></svg>


<!-- top right icons -->
<svg style="left:1291px;top:8.5px" width="12.5" height="11" viewBox="0 0 12.5 11"><circle cx="6.25" cy="3" r="2.9" fill="#fff"></circle><path d="M0 11 V9.6 Q0.5 7 4.5 6.3 L6.25 7.5 L8 6.3 Q12 7 12.5 9.6 V11 Z" fill="#fff"></path></svg>
<svg style="left:1312.5px;top:10.5px" width="12.5" height="9.5" viewBox="0 0 12.5 9.5"><path d="M2 0 H10.5 L12.5 4.5 V9.5 H0 V4.5 Z" fill="#fff"></path><path d="M2.5 1.3 H10 L11.2 4.5 H8.3 Q7.8 6.2 6.25 6.2 Q4.7 6.2 4.2 4.5 H1.3 Z" fill="#244a8e"></path></svg>
<svg style="left:1336px;top:9.5px" width="11" height="9" viewBox="0 0 11 9"><path d="M1.2 8.5 Q0.8 2.5 6 2.2 L8 2.2" fill="none" stroke="#fff" stroke-width="1.6"></path><path d="M7 0 L10.8 2.4 L7 4.8 Z" fill="#fff"></path></svg>
<svg style="left:1359.5px;top:8.5px" width="9" height="11" viewBox="0 0 9 11"><circle cx="4.5" cy="3.8" r="3.3" fill="none" stroke="#6f8cbf" stroke-width="1"></circle><path d="M2.8 3.5 H6.2 M4.5 1.5 V6" stroke="#6f8cbf" stroke-width="0.7"></path><rect x="0.5" y="8.5" width="8" height="2.2" rx="1" fill="none" stroke="#6f8cbf" stroke-width="0.7"></rect></svg>
<span class="t" style="color: rgb(255, 255, 255); font-size: 14.5px; font-weight: bold; left: 1382.5px; top: 7px; transform: scaleX(0.903);">?</span>
<svg style="left:1402.5px;top:8.5px" width="12.5" height="12" viewBox="0 0 12.5 12"><path d="M3.7 2.6 A4.8 4.8 0 1 0 8.8 2.6" fill="none" stroke="#fff" stroke-width="1.7"></path><path d="M6.25 0 V6" stroke="#fff" stroke-width="1.7"></path></svg>
<span class="t" style="color: rgb(255, 255, 255); font-size: 12.5px; font-weight: bold; left: 1421.5px; top: 9px; transform: scaleX(0.918);">EVI</span>
<svg style="left:1439.5px;top:10px" width="11" height="11" viewBox="0 0 11 11"><circle cx="1.5" cy="1.5" r="1" fill="#fff"></circle><path d="M7 0.5 L10 10 L4.5 10 Z" fill="#e8eef8"></path><path d="M7 0.5 L6 10" stroke="#aab" stroke-width="0.5"></path></svg>

<!-- activity card -->
<div class="a" style="left:733px;top:210px;width:461px;height:449px;background:#fcfcfc;box-shadow:0 1px 1px rgba(0,0,0,.12)"></div>
<div class="a" style="left:733px;top:237px;width:461px;height:1px;background:#e6e4e0"></div>
<div class="a" style="left:733px;top:234px;width:78px;height:3px;background:#244a8e"></div>
<span class="t" style="color: rgb(34, 34, 34); font-size: 10px; left: 746.4px; top: 218px; transform: scaleX(0.785);">AKTIVITÄTEN</span>
<span class="t" style="color: rgb(119, 119, 119); font-size: 10px; left: 825.4px; top: 218px; transform: scaleX(0.834);">ÄNDERUNGEN</span>
<span class="t" style="color: rgb(119, 119, 119); font-size: 10px; left: 914.1px; top: 218px; transform: scaleX(0.77);">EVENTS</span>
<!-- scrollbar -->
<div class="a" style="left:1180px;top:238px;width:12.5px;height:420px;background:#efeeec"></div>
<div class="a" style="left:1180px;top:251.5px;width:12.5px;height:331px;background:#cdcac4"></div>
<svg style="left:1182.5px;top:242.5px" width="8" height="5" viewBox="0 0 8 5"><path d="M0.8 4.3 L4 1 L7.2 4.3" fill="none" stroke="#444" stroke-width="1.4"></path></svg>
<svg style="left:1182px;top:648.5px" width="8" height="5" viewBox="0 0 8 5"><path d="M0.8 0.7 L4 4 L7.2 0.7" fill="none" stroke="#444" stroke-width="1.4"></path></svg>
<!-- floating arrow -->
<div class="a" style="left:1100px;top:600px;width:94px;height:50px;overflow:hidden"><div class="a" style="left:73.5px;top:8.5px;width:30px;height:30px;border-radius:50%;background:#fbfbfb;box-shadow:0 1px 3px rgba(0,0,0,.25)"></div>
<svg style="left:83.5px;top:18.5px" width="9" height="10" viewBox="0 0 9 10"><path d="M8.5 5 H1 M5 1 L1 5 L5 9" fill="none" stroke="#666" stroke-width="1.2"></path></svg></div>
<!-- comment box -->
<div class="a" style="left:741px;top:251.5px;width:24.5px;height:24.5px;border-radius:50%;background:#244a8e"></div>
<span class="t" style="color: rgb(238, 242, 248); font-size: 9px; left: 746.5px; top: 257.6px; transform: scaleX(0.756);">PSR</span>
<div class="a" style="left:771px;top:251px;width:402px;height:25.5px;border-radius:13px;background:#fefefe;border:1px solid #e2e0dc"></div>
<span class="t" style="color: rgb(106, 106, 106); font-size: 10px; left: 781.6px; top: 258px; transform: scaleX(0.897);">Kommentar schreiben...</span>
<span class="t" style="color: rgb(136, 136, 136); font-size: 11px; left: 746.5px; top: 284.95px; transform: scaleX(0.85);">@</span>
<svg style="left:766.5px;top:286px" width="9" height="11" viewBox="0 0 9 11"><rect x="0.6" y="1.6" width="7.8" height="8.8" fill="none" stroke="#8e8880" stroke-width="1.1"></rect><path d="M3 0.6 H6" stroke="#8e8880" stroke-width="1"></path><path d="M2.3 8.3 L6.5 3.5" stroke="#8e8880" stroke-width="1"></path></svg>
<svg style="left:785px;top:289px" width="11" height="7" viewBox="0 0 11 7"><rect x="0" y="0" width="10.5" height="6.5" fill="#dedcd8"></rect><path d="M0.3 0.3 L5.25 3.8 L10.2 0.3" fill="none" stroke="#f5f5f5" stroke-width="0.9"></path></svg>
<svg style="left:1155px;top:286.5px" width="13" height="11" viewBox="0 0 13 11"><path d="M0 0 L13 5.5 L0 11 L1.5 5.5 Z" fill="#666"></path><path d="M1.5 5.5 H6" stroke="#fcfcfc" stroke-width="0.8"></path></svg>
<div class="a" style="left:734px;top:310px;width:445px;height:1px;background:#e6e4e0"></div>
<!-- empty state -->
<div class="a" style="left:745.5px;top:322px;width:423px;height:106px;border-radius:3px;background:#efeeec"></div>
<svg style="left:942.5px;top:339.5px" width="30" height="26" viewBox="0 0 30 26"><path d="M15 0.8 C23 0.8 29.2 5.5 29.2 11.2 C29.2 17 23 21.6 15 21.6 C13.5 21.6 12 21.4 10.6 21.1 L5.5 25 L6.8 19.5 C3 17.6 0.8 14.6 0.8 11.2 C0.8 5.5 7 0.8 15 0.8 Z" fill="#d8ecfb" stroke="#3a8fd6" stroke-width="1.1"></path></svg>
<span class="t" style="color: rgb(51, 51, 51); font-size: 10.5px; font-weight: bold; left: 904.9px; top: 374.95px; transform: scaleX(0.856);">Noch keine Kommentare</span>
<span class="t" style="color: rgb(51, 51, 51); font-size: 10px; left: 759.4px; top: 391.3px; transform: scaleX(0.871);">Schreiben Sie einen Kommentar, um eine Diskussion zu beginnen! Erwähnen Sie einen Mitarbeiter mit</span>
<span class="t" style="color: rgb(51, 51, 51); font-size: 10px; left: 884.3px; top: 402px; transform: scaleX(0.844);"><span style="color:#3b2f9a">@KÜRZEL</span>, um Ihn zu benachrichtigen</span>
<span class="t" style="color: rgb(85, 85, 85); font-size: 10px; left: 911.3px; top: 450.8px; transform: scaleX(0.873);">Sie können aber auch...</span>
<div class="a" style="left:834.3px;top:483px;width:111px;height:72.5px;border-radius:3px;background:#efeeec"></div>
<div class="a" style="left:968.6px;top:483px;width:111.4px;height:72.5px;border-radius:3px;background:#efeeec"></div>
<svg style="left:880.4px;top:494px" width="19.5" height="24.5" viewBox="0 0 19.5 24.5"><rect x="1" y="3" width="17.5" height="20.5" rx="1.5" fill="#fff" stroke="#3b4a4a" stroke-width="1.6"></rect><rect x="6" y="0.8" width="7.5" height="4" rx="1.5" fill="#fff" stroke="#3b4a4a" stroke-width="1.3"></rect><path d="M4.5 13 L8.3 17 L15 8.5" fill="none" stroke="#17a03a" stroke-width="2"></path></svg>
<svg style="left:1013.9px;top:496px" width="23" height="19.5" viewBox="0 0 23 19.5"><rect x="0" y="0" width="17" height="12" fill="#cfd8de"></rect><path d="M0.5 0.5 L8.5 7 L16.5 0.5" fill="none" stroke="#f5f7f8" stroke-width="1.2"></path><path d="M10 19 V14 Q10 10.5 14 10.5 H17 V7.5 L23 12.5 L17 17.5 V14.5 H14.5 Q13.5 14.5 13.5 16 V19 Z" fill="#c41fa8"></path></svg>
<div class="a" style="left:844.3px;top:528.3px;width:90.6px;height:17px;border-radius:3px;background:#244a8e"></div>
<span class="t" style="color: rgb(255, 255, 255); font-size: 10px; left: 854px; top: 531.6px; transform: scaleX(0.939);">Aktivität erstellen</span>
<div class="a" style="left:979.4px;top:528.3px;width:90.2px;height:17px;border-radius:3px;background:#244a8e"></div>
<span class="t" style="color: rgb(255, 255, 255); font-size: 10px; left: 990.5px; top: 531.6px; transform: scaleX(0.874);">E-Mail versenden</span>

<!-- actions -->
<span class="t" style="color: rgb(119, 119, 119); font-size: 10px; left: 1218.3px; top: 161.3px; transform: scaleX(0.922);">Aktionen</span>
<svg style="left:1218.8px;top:189.0px" width="6" height="4" viewBox="0 0 6 4"><path d="M0 0 H6 L3 3.5 Z" fill="#1f3f80"></path></svg>
<svg style="left:1227.0px;top:187.0px" width="13" height="10" viewBox="0 0 13 10"><path d="M0 1 Q0 0 1 0 H4.5 L5.8 1.5 H12 Q13 1.5 13 2.5 V9 Q13 10 12 10 H1 Q0 10 0 9 Z" fill="#f5c153"></path><path d="M0 3 H13 V9 Q13 10 12 10 H1 Q0 10 0 9 Z" fill="#fbd77a"></path></svg>
<span class="t" style="color: rgb(31, 31, 31); left: 1244.6px; top: 186px; transform: scaleX(0.878);">Geschäftskunden</span>
<svg style="left:1242.0px;top:207.7px" width="11" height="11" viewBox="0 0 11 11"><circle cx="5.5" cy="5.5" r="5.5" fill="#0b93ee"></circle><path d="M4 2.8 L8.2 5.5 L4 8.2 Z" fill="#fff"></path></svg>
<span class="t" style="color: rgb(31, 31, 31); left: 1258.6px; top: 207.2px; transform: scaleX(0.904);">Anlagenkonten verwalten</span>
<svg style="left:1242.0px;top:231.4px" width="11" height="11" viewBox="0 0 11 11"><circle cx="5.5" cy="5.5" r="5.5" fill="#0b93ee"></circle><path d="M4 2.8 L8.2 5.5 L4 8.2 Z" fill="#fff"></path></svg>
<span class="t" style="color: rgb(31, 31, 31); left: 1258.6px; top: 230.9px; transform: scaleX(0.925);">Anlagenkonten importieren</span>
<svg style="left:1242.0px;top:254.5px" width="11" height="11" viewBox="0 0 11 11"><circle cx="5.5" cy="5.5" r="5.5" fill="#0b93ee"></circle><path d="M4 2.8 L8.2 5.5 L4 8.2 Z" fill="#fff"></path></svg>
<span class="t" style="color: rgb(31, 31, 31); left: 1258.6px; top: 254px; transform: scaleX(0.885);">Preiskalkulation erzeugen</span>
<svg style="left:1242.0px;top:278.4px" width="11" height="11" viewBox="0 0 11 11"><circle cx="5.5" cy="5.5" r="5.5" fill="#0b93ee"></circle><path d="M4 2.8 L8.2 5.5 L4 8.2 Z" fill="#fff"></path></svg>
<span class="t" style="color: rgb(31, 31, 31); left: 1258.6px; top: 277.9px; transform: scaleX(0.906);">Summenkalkulation ausrollen</span>
<svg style="left:1242.0px;top:301.5px" width="11" height="11" viewBox="0 0 11 11"><circle cx="5.5" cy="5.5" r="5.5" fill="#0b93ee"></circle><path d="M4 2.8 L8.2 5.5 L4 8.2 Z" fill="#fff"></path></svg>
<span class="t" style="color: rgb(31, 31, 31); left: 1258.6px; top: 301px; transform: scaleX(0.912);">Angebot kalkulieren</span>
<svg style="left:1242.0px;top:325.4px" width="11" height="11" viewBox="0 0 11 11"><circle cx="5.5" cy="5.5" r="5.5" fill="#0b93ee"></circle><path d="M4 2.8 L8.2 5.5 L4 8.2 Z" fill="#fff"></path></svg>
<span class="t" style="color: rgb(31, 31, 31); left: 1258.6px; top: 324.9px; transform: scaleX(0.912);">Angebotsdokument erstellen</span>
<svg style="left:1242.0px;top:348.5px" width="11" height="11" viewBox="0 0 11 11"><circle cx="5.5" cy="5.5" r="5.5" fill="#0b93ee"></circle><path d="M4 2.8 L8.2 5.5 L4 8.2 Z" fill="#fff"></path></svg>
<span class="t" style="color: rgb(31, 31, 31); left: 1258.6px; top: 348px; transform: scaleX(0.908);">Angebotsdokument per Mail versenden</span>
<svg style="left:1242.0px;top:372.0px" width="11" height="11" viewBox="0 0 11 11"><circle cx="5.5" cy="5.5" r="5.5" fill="#0b93ee"></circle><path d="M4 2.8 L8.2 5.5 L4 8.2 Z" fill="#fff"></path></svg>
<span class="t" style="color: rgb(31, 31, 31); left: 1258.6px; top: 371.5px; transform: scaleX(0.901);">Angebot abschließen</span>
<svg style="left:1242.0px;top:395.5px" width="11" height="11" viewBox="0 0 11 11"><circle cx="5.5" cy="5.5" r="5.5" fill="#0b93ee"></circle><path d="M4 2.8 L8.2 5.5 L4 8.2 Z" fill="#fff"></path></svg>
<span class="t" style="color: rgb(31, 31, 31); left: 1258.6px; top: 395px; transform: scaleX(0.913);">Angebot kopieren</span>
<div class="a" style="left:1218px;top:314px;width:209px;height:30px;border:2px solid #f01018"></div>
<svg style="left:1202.7px;top:404px" width="4" height="6" viewBox="0 0 4 6"><path d="M0.5 0.5 L3.3 3 L0.5 5.5" fill="none" stroke="#244a8e" stroke-width="1.1"></path></svg>
<svg style="left:1218.8px;top:423.0px" width="6" height="4" viewBox="0 0 6 4"><path d="M0 0 H6 L3 3.5 Z" fill="#1f3f80"></path></svg>
<svg style="left:1227.0px;top:421.0px" width="13" height="10" viewBox="0 0 13 10"><path d="M0 1 Q0 0 1 0 H4.5 L5.8 1.5 H12 Q13 1.5 13 2.5 V9 Q13 10 12 10 H1 Q0 10 0 9 Z" fill="#f5c153"></path><path d="M0 3 H13 V9 Q13 10 12 10 H1 Q0 10 0 9 Z" fill="#fbd77a"></path></svg>
<span class="t" style="color: rgb(31, 31, 31); left: 1244.3px; top: 420px; transform: scaleX(0.904);">Privatkunden</span>
<svg style="left:1242.0px;top:442.1px" width="11" height="11" viewBox="0 0 11 11"><circle cx="5.5" cy="5.5" r="5.5" fill="#0b93ee"></circle><path d="M4 2.8 L8.2 5.5 L4 8.2 Z" fill="#fff"></path></svg>
<span class="t" style="color: rgb(31, 31, 31); left: 1258.6px; top: 441.6px; transform: scaleX(0.901);">Angebot abschließen</span>
<svg style="left:1218.8px;top:469.5px" width="6" height="4" viewBox="0 0 6 4"><path d="M0 0 H6 L3 3.5 Z" fill="#1f3f80"></path></svg>
<svg style="left:1227.0px;top:467.5px" width="13" height="10" viewBox="0 0 13 10"><path d="M0 1 Q0 0 1 0 H4.5 L5.8 1.5 H12 Q13 1.5 13 2.5 V9 Q13 10 12 10 H1 Q0 10 0 9 Z" fill="#f5c153"></path><path d="M0 3 H13 V9 Q13 10 12 10 H1 Q0 10 0 9 Z" fill="#fbd77a"></path></svg>
<span class="t" style="color: rgb(31, 31, 31); left: 1244.3px; top: 466.7px; transform: scaleX(0.833);">Allgemein</span>
<svg style="left:1241px;top:488px" width="12" height="12" viewBox="0 0 12 12"><rect x="0.5" y="1.5" width="11" height="10" fill="#f3f7fb" stroke="#cfdbe6" stroke-width="1"></rect><path d="M3 7 L5 9 L9 4" fill="none" stroke="#cfe0cf" stroke-width="1.2"></path></svg>
<span class="t" style="color: rgb(196, 196, 196); left: 1258.6px; top: 487.9px; transform: scaleX(0.86);">Events anzeigen</span>
<!-- bottom bar -->
<div class="a" style="left:20px;top:665px;width:1435px;height:36px;background:#fcfcfc;border-top:1px solid #e4e2dd"></div>
<svg style="left:727px;top:667.5px" width="6" height="4" viewBox="0 0 6 4"><path d="M0.5 0.5 L3 3 L5.5 0.5" fill="none" stroke="#999" stroke-width="0.9"></path></svg>
<svg style="left:744.5px;top:667.5px" width="6" height="4" viewBox="0 0 6 4"><path d="M0.5 3.5 L3 1 L5.5 3.5" fill="none" stroke="#999" stroke-width="0.9"></path></svg>
<div class="a" style="left:733.3px;top:698px;width:148px;height:3px;background:#244a8e"></div>
<svg style="left:28px;top:680px" width="10" height="12" viewBox="0 0 10 12"><rect x="0.6" y="1.6" width="8.8" height="9.8" fill="#fff" stroke="#56606a" stroke-width="1"></rect><rect x="3" y="0.5" width="4" height="2" fill="#56606a"></rect><path d="M2.5 6.5 L4.3 8.5 L7.5 4.5" fill="none" stroke="#18a03c" stroke-width="1.3"></path></svg>
<span class="t" style="color: rgb(124, 124, 124); font-size: 10px; left: 43.6px; top: 681px; transform: scaleX(0.8);">AKTIVITÄTEN (0)</span>
<svg style="left:115.1px;top:682.5px" width="6" height="6" viewBox="0 0 6 6"><path d="M0.8 0.8 L5.2 5.2 M5.2 0.8 L0.8 5.2" stroke="#1f3f80" stroke-width="1.6"></path></svg>
<svg style="left:139.2px;top:680.5px" width="11" height="11" viewBox="0 0 11 11"><path d="M0 0 H11 V8 L8 11 H0 Z" fill="#f8b800"></path><path d="M2 3 H9 M2 5.5 H9" stroke="#fde08a" stroke-width="0.9"></path><path d="M8 11 V8 H11" fill="#d89000"></path></svg>
<span class="t" style="color: rgb(124, 124, 124); font-size: 10px; left: 155.3px; top: 681px; transform: scaleX(0.847);">NOTIZEN (0)</span>
<svg style="left:213.0px;top:682.5px" width="6" height="6" viewBox="0 0 6 6"><path d="M0.8 0.8 L5.2 5.2 M5.2 0.8 L0.8 5.2" stroke="#1f3f80" stroke-width="1.6"></path></svg>
<svg style="left:238px;top:680px" width="10" height="12" viewBox="0 0 10 12"><path d="M0.5 0.5 H6.5 L9.5 3.5 V11.5 H0.5 Z" fill="#fbfcfd" stroke="#8a9aa8" stroke-width="1"></path><path d="M6.5 0.5 V3.5 H9.5" fill="none" stroke="#8a9aa8" stroke-width="0.8"></path></svg>
<span class="t" style="color: rgb(124, 124, 124); font-size: 10px; left: 253.3px; top: 681px; transform: scaleX(0.831);">DOKUMENTE (0)</span>
<svg style="left:326.8px;top:682.5px" width="6" height="6" viewBox="0 0 6 6"><path d="M0.8 0.8 L5.2 5.2 M5.2 0.8 L0.8 5.2" stroke="#1f3f80" stroke-width="1.6"></path></svg>
<svg style="left:350.5px;top:680px" width="10" height="12" viewBox="0 0 10 12"><rect x="3.5" y="0" width="6.5" height="9" fill="#5a8fd0"></rect><path d="M4.5 1.5h1M7 1.5h1M4.5 3.5h1M7 3.5h1M4.5 5.5h1M7 5.5h1" stroke="#fff" stroke-width="0.8"></path><circle cx="3.2" cy="6" r="2.1" fill="#e8a060"></circle><path d="M0 12 V10.3 Q3.2 7.5 6.4 10.3 V12 Z" fill="#2a5ea8"></path></svg>
<span class="t" style="color: rgb(124, 124, 124); font-size: 10px; left: 367px; top: 681px; transform: scaleX(0.782);">GESCHÄFTSPARTNER (1)</span>
<svg style="left:471.5px;top:682.5px" width="6" height="6" viewBox="0 0 6 6"><path d="M0.8 0.8 L5.2 5.2 M5.2 0.8 L0.8 5.2" stroke="#1f3f80" stroke-width="1.6"></path></svg>
<svg style="left:496.5px;top:680px" width="10.5" height="12" viewBox="0 0 10.5 12"><circle cx="5.25" cy="3.5" r="3" fill="#e0a070"></circle><path d="M2.2 3 Q2.5 0 5.25 0.3 Q8 0 8.3 3 Q7 1.5 5.25 1.8 Q3.5 1.5 2.2 3 Z" fill="#6a4020"></path><path d="M0 12 V10.5 Q0.5 7.5 5.25 7.3 Q10 7.5 10.5 10.5 V12 Z" fill="#2f6470"></path></svg>
<span class="t" style="color: rgb(124, 124, 124); font-size: 10px; left: 512.6px; top: 681px; transform: scaleX(0.8);">ANSPRECHPARTNER (1)</span>
<svg style="left:614.7px;top:682.5px" width="6" height="6" viewBox="0 0 6 6"><path d="M0.8 0.8 L5.2 5.2 M5.2 0.8 L0.8 5.2" stroke="#1f3f80" stroke-width="1.6"></path></svg>
<svg style="left:638.8px;top:680.5px" width="12" height="11" viewBox="0 0 12 11"><rect x="0.5" y="0.5" width="11" height="10" fill="#f2f6fa" stroke="#7f98b0" stroke-width="1"></rect><path d="M2 8.5 L4.5 5.5 L6.5 7 L10 3" fill="none" stroke="#3a7ac8" stroke-width="1"></path></svg>
<span class="t" style="color: rgb(124, 124, 124); font-size: 10px; left: 655.3px; top: 681px; transform: scaleX(0.77);">PROJEKTE (0)</span>
<svg style="left:715.4px;top:682.5px" width="6" height="6" viewBox="0 0 6 6"><path d="M0.8 0.8 L5.2 5.2 M5.2 0.8 L0.8 5.2" stroke="#1f3f80" stroke-width="1.6"></path></svg>
<svg style="left:741px;top:680px" width="9" height="12" viewBox="0 0 9 12"><rect x="0" y="0" width="9" height="12" rx="0.6" fill="#4e4e4a"></rect><rect x="0.9" y="1.1" width="7.2" height="2.3" fill="#82dc5c"></rect><path d="M1.6 5.3h1.2M3.9 5.3h1.2M1.6 7.3h1.2M3.9 7.3h1.2M6.2 7.3h1.2M1.6 9.3h1.2M3.9 9.3h1.2M6.2 9.3h1.2M1.6 11h1.2M3.9 11h1.2M6.2 11h1.2" stroke="#cfcfcb" stroke-width="1.1"></path><circle cx="6.8" cy="5.3" r="0.9" fill="#f03030"></circle></svg>
<span class="t" style="color: rgb(38, 38, 38); font-size: 10px; left: 756px; top: 681px; transform: scaleX(0.811);">PREISKALKULATIONEN (0)</span>
<svg style="left:867.6px;top:682.5px" width="6" height="6" viewBox="0 0 6 6"><path d="M0.8 0.8 L5.2 5.2 M5.2 0.8 L0.8 5.2" stroke="#1f3f80" stroke-width="1.6"></path></svg>
<svg style="left:892px;top:680.5px" width="11" height="11" viewBox="0 0 11 11"><rect x="1.8" y="0.3" width="7.5" height="9.2" fill="#5ab0f0"></rect><rect x="0.3" y="3.3" width="1.8" height="6.2" fill="#1a78d8"></rect><path d="M3.2 1.6H8M3.2 4H4.5M6 4H8M3.2 6.2H4.5" stroke="#1a80e0" stroke-width="1"></path><circle cx="8.2" cy="8" r="2.8" fill="#2aa84a"></circle><path d="M7.2 9.5 V6.8 H9" fill="none" stroke="#9ee0a8" stroke-width="0.8"></path></svg>
<span class="t" style="color: rgb(124, 124, 124); font-size: 10px; left: 907.8px; top: 681px; transform: scaleX(0.841);">ANLAGENKONTO (0)</span>
<svg style="left:998.6px;top:682.5px" width="6" height="6" viewBox="0 0 6 6"><path d="M0.8 0.8 L5.2 5.2 M5.2 0.8 L0.8 5.2" stroke="#1f3f80" stroke-width="1.6"></path></svg>
<svg style="left:1022px;top:679.5px" width="12" height="13" viewBox="0 0 12 13"><path d="M0.5 0.5 H6.5 L8.5 2.5 V12.5 H0.5 Z" fill="#f3f6f8" stroke="#7a8a98" stroke-width="1"></path><path d="M2 4h4M2 6h4M2 8h4" stroke="#7a8a98" stroke-width="0.7"></path><rect x="5" y="5" width="7" height="3.5" fill="#f8c020"></rect><rect x="2" y="9.5" width="5" height="2" fill="#2a7ad0"></rect></svg>
<span class="t" style="color: rgb(124, 124, 124); font-size: 10px; left: 1038.5px; top: 681px; transform: scaleX(0.811);">ANGEBOTSPOSITIONEN (0)</span>
<svg style="left:1153.6px;top:682.5px" width="6" height="6" viewBox="0 0 6 6"><path d="M0.8 0.8 L5.2 5.2 M5.2 0.8 L0.8 5.2" stroke="#1f3f80" stroke-width="1.6"></path></svg>
<svg style="left:1178.4px;top:680px" width="11.5" height="12" viewBox="0 0 11.5 12"><rect x="0" y="0" width="9" height="2.2" fill="#3a70c0"></rect><path d="M0.5 3.5 H8 M0.5 5.5 H6 M0.5 7.5 H5" stroke="#7a9ac8" stroke-width="1"></path><circle cx="8" cy="8.5" r="3.3" fill="#1a9ae0"></circle><circle cx="8" cy="8.5" r="1.6" fill="#fff"></circle></svg>
<span class="t" style="color: rgb(124, 124, 124); font-size: 10px; left: 1194.5px; top: 681px; transform: scaleX(0.817);">VARIANTE (0)</span>
<svg style="left:1255.0px;top:682.5px" width="6" height="6" viewBox="0 0 6 6"><path d="M0.8 0.8 L5.2 5.2 M5.2 0.8 L0.8 5.2" stroke="#1f3f80" stroke-width="1.6"></path></svg>
<svg style="left:1284px;top:681px" width="3" height="11" viewBox="0 0 3 11"><circle cx="1.5" cy="1.5" r="1.1" fill="#244a8e"></circle><circle cx="1.5" cy="5.5" r="1.1" fill="#244a8e"></circle><circle cx="1.5" cy="9.5" r="1.1" fill="#244a8e"></circle></svg>
<span class="t" style="color: rgb(124, 124, 124); font-size: 10px; left: 1295.9px; top: 681px; transform: scaleX(0.76);">WEITERE BEREICHE</span>
<div class="a" style="left:1448px;top:674px;width:1px;height:27px;background:#efeeeb"></div><svg style="left:1450.5px;top:684px" width="4" height="7" viewBox="0 0 4 7"><path d="M3.5 0.5 L0.8 3.5 L3.5 6.5" fill="none" stroke="#244a8e" stroke-width="1.4"></path></svg>


</body></html>
